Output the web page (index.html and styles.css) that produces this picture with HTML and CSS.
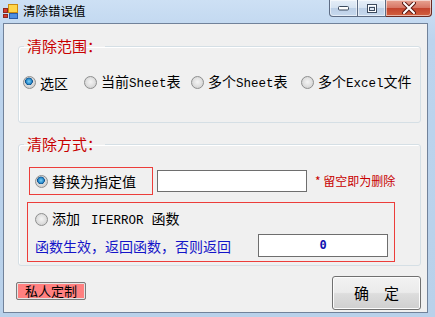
FILE: index.html
```html
<!DOCTYPE html>
<html lang="zh">
<head>
  <meta charset="UTF-8">
  <title>清除错误值</title>
  <link rel="stylesheet" href="styles.css">
</head>
<body>
  <div class="window">
    <div class="titlebar">
      <svg class="app-icon" width="15" height="15" viewBox="0 0 15 15">
        <rect x="0.5" y="4.5" width="4" height="4" fill="#d83a2e" stroke="#8a2a20"/>
        <rect x="0.5" y="10.5" width="4" height="3" fill="#d83a2e" stroke="#8a2a20"/>
        <rect x="5.5" y="0.5" width="9" height="8" fill="#ffd54a" stroke="#c98a10"/>
        <rect x="6.5" y="9.5" width="8" height="5" fill="#4f8ee0" stroke="#2a5ca8"/>
      </svg>
      <span class="title">清除错误值</span>
      <div class="caption-btns">
        <span class="cap min">
          <svg width="12" height="6" viewBox="0 0 12 6"><rect x="0.5" y="1.5" width="10" height="3.5" rx="1" fill="#fff" stroke="#3c4a5e"/></svg>
        </span>
        <span class="cap max">
          <svg width="12" height="11" viewBox="0 0 12 11"><rect x="1.5" y="1.5" width="9" height="8" fill="none" stroke="#3c4a5e" stroke-width="1"/><rect x="2.5" y="2.5" width="7" height="6" fill="none" stroke="#fff" stroke-width="1"/><rect x="3.5" y="4.5" width="5" height="3" fill="#dde7f3" stroke="#3c4a5e"/></svg>
        </span>
        <span class="cap close">
          <svg width="14" height="12" viewBox="0 0 14 12"><path d="M2 1 L12 11 M12 1 L2 11" stroke="#5a1a14" stroke-width="4" stroke-linecap="round"/><path d="M2 1 L12 11 M12 1 L2 11" stroke="#fff" stroke-width="2" stroke-linecap="round"/></svg>
        </span>
      </div>
    </div>

    <div class="client">
      <fieldset class="group scope">
        <legend>清除范围：</legend>
        <div class="radio-row">
          <label class="radio"><span class="dot on"></span><span class="lbl">选区</span></label>
          <label class="radio"><span class="dot"></span><span class="lbl">当前<span class="en">Sheet</span>表</span></label>
          <label class="radio"><span class="dot"></span><span class="lbl">多个<span class="en">Sheet</span>表</span></label>
          <label class="radio"><span class="dot"></span><span class="lbl">多个<span class="en">Excel</span>文件</span></label>
        </div>
      </fieldset>

      <fieldset class="group mode">
        <legend>清除方式：</legend>
        <div class="replace-row">
          <div class="redbox replace"><span class="dot on"></span><span class="lbl">替换为指定值</span></div>
          <div class="textbox value"></div>
          <span class="hint">* 留空即为删除</span>
        </div>
        <div class="redbox iferror">
          <div class="radio-line"><span class="dot"></span><span class="lbl">添加<span class="en fn">IFERROR</span>函数</span></div>
          <div class="fn-line">
            <span class="fn-text">函数生效，返回函数，否则返回</span>
            <div class="textbox ret">0</div>
          </div>
        </div>
      </fieldset>

      <div class="footer">
        <button class="custom">私人定制</button>
        <button class="ok">确　定</button>
      </div>
    </div>
  </div>
</body>
</html>
```

FILE: styles.css
```css
body {
  margin: 0;
  font-family: "Noto Sans CJK SC", sans-serif;
  background: #fff;
}

.window {
  width: 435px;
  height: 317px;
  display: flex;
  flex-direction: column;
  background: linear-gradient(180deg, #cde0f4 0, #bcd4ee 40px, #b9d1ea 100%);
}

/* title bar */
.titlebar {
  height: 23px;
  display: flex;
  align-items: flex-start;
  flex-shrink: 0;
}

.app-icon {
  margin: 4px 0 0 3px;
}

.title {
  margin: 3px 0 0 5px;
  font-size: 12.5px;
  line-height: 16px;
  color: #000;
}

.caption-btns {
  margin-left: auto;
  margin-right: 3px;
  display: flex;
}

.cap {
  height: 16px;
  display: flex;
  align-items: center;
  justify-content: center;
  border: 1px solid #5d6c84;
  border-top: none;
  box-shadow: inset 0 0 0 1px rgba(255,255,255,0.55);
}

.cap.min {
  width: 27px;
  border-bottom-left-radius: 4px;
  background: linear-gradient(180deg, #e6eef8 0, #d5e2f1 50%, #bccfe6 51%, #c7d9ee 100%);
}

.cap.max {
  width: 27px;
  border-left: none;
  background: linear-gradient(180deg, #e6eef8 0, #d5e2f1 50%, #bccfe6 51%, #c7d9ee 100%);
}

.cap.close {
  width: 45px;
  border-left: none;
  border-color: #6b2a22;
  border-bottom-right-radius: 4px;
  background: linear-gradient(180deg, #e8a493 0, #d77563 50%, #c3432d 51%, #d2603f 100%);
}

/* client area */
.client {
  flex: 1;
  margin: 0 7px 4px 3px;
  border: 1px solid #71829a;
  background: #f0f0f0;
}

.group {
  box-sizing: border-box;
  width: 403px;
  margin: 14px 0 0 14px;
  padding: 0 0 0 4px;
  border: 1px solid #d5dfe5;
  border-radius: 3px;
  box-shadow: inset 1px 1px 0 #fff;
}

.group legend {
  margin-left: 1px;
  padding: 0 3px;
  font-size: 15px;
  line-height: 16px;
  color: #c80000;
}

.scope {
  padding-bottom: 30px;
}

.mode {
  margin-top: 13px;
  padding-bottom: 3px;
}

.lbl {
  white-space: nowrap;
}

.en {
  font-family: "Liberation Mono", monospace;
  font-size: 12.5px;
}

/* radios */
.radio-row {
  margin-top: 19px;
  display: flex;
  align-items: center;
  font-size: 14px;
  line-height: 16px;
  color: #000;
}

.radio {
  display: flex;
  align-items: center;
  white-space: nowrap;
}

.radio:nth-child(1) { width: 61px; }
.radio:nth-child(2) { width: 107px; }
.radio:nth-child(3) { width: 110px; }

.dot {
  box-sizing: border-box;
  width: 13px;
  height: 13px;
  margin-right: 4px;
  flex-shrink: 0;
  border-radius: 50%;
  border: 1px solid #8e8f8f;
  background: radial-gradient(circle at 50% 45%, #f4f4f4 0, #e2e2e2 45%, #c9c9c9 100%);
}

.dot.on {
  background: radial-gradient(circle at 45% 40%, #7fd0f5 0, #2c8fcf 28%, #0d4f8a 40%, #dcdcdc 46%, #c6c6c6 100%);
}

/* mode group */
.replace-row {
  margin-top: 15px;
  display: flex;
  align-items: center;
}

.redbox {
  box-sizing: border-box;
  border: 1px solid #ec3d3a;
}

.replace {
  width: 124px;
  height: 28px;
  margin-left: 6px;
  padding-left: 5px;
  display: flex;
  align-items: center;
  font-size: 14px;
  line-height: 16px;
}

.textbox {
  box-sizing: border-box;
  border: 1px solid #6e6e6e;
  background: #fff;
}

.value {
  width: 150px;
  height: 22px;
  margin-left: 4px;
}

.hint {
  margin-left: 8px;
  font-size: 12px;
  line-height: 14px;
  color: #c80000;
}

.iferror {
  width: 368px;
  height: 60px;
  margin: 7px 0 0 4px;
  padding: 7px 0 0 7px;
}

.radio-line {
  display: flex;
  align-items: center;
  font-size: 14px;
  line-height: 16px;
}

.en.fn {
  margin: 0 8px 0 11px;
}

.fn-line {
  margin-top: 5px;
  display: flex;
  align-items: center;
}

.fn-text {
  width: 223px;
  font-size: 14px;
  line-height: 16px;
  color: #1414c8;
}

.ret {
  width: 130px;
  height: 23px;
  text-align: center;
  font-family: "DejaVu Sans Mono", monospace;
  font-weight: bold;
  font-size: 12px;
  line-height: 20px;
  color: #1010b0;
}

/* footer buttons */
.footer {
  display: flex;
  justify-content: space-between;
  align-items: flex-start;
  margin: 10px 6px 0 12px;
}

button {
  font-family: "Noto Sans CJK SC", sans-serif;
  color: #000;
  cursor: pointer;
}

.custom {
  width: 70px;
  height: 18px;
  margin-top: 6px;
  padding: 0;
  border: 1px solid #7a7a7a;
  border-radius: 2px;
  background: #ff8080;
  box-shadow: inset 0 0 0 1px #e4e4e4;
  font-size: 13px;
  line-height: 14px;
}

.ok {
  width: 89px;
  height: 34px;
  padding: 0;
  border: 1px solid #707070;
  border-radius: 3px;
  background: linear-gradient(180deg, #f2f2f2 0, #ebebeb 48%, #dddddd 52%, #cfcfcf 100%);
  box-shadow: inset 0 0 0 1px #fcfcfc;
  font-size: 15px;
  line-height: 16px;
}
```
